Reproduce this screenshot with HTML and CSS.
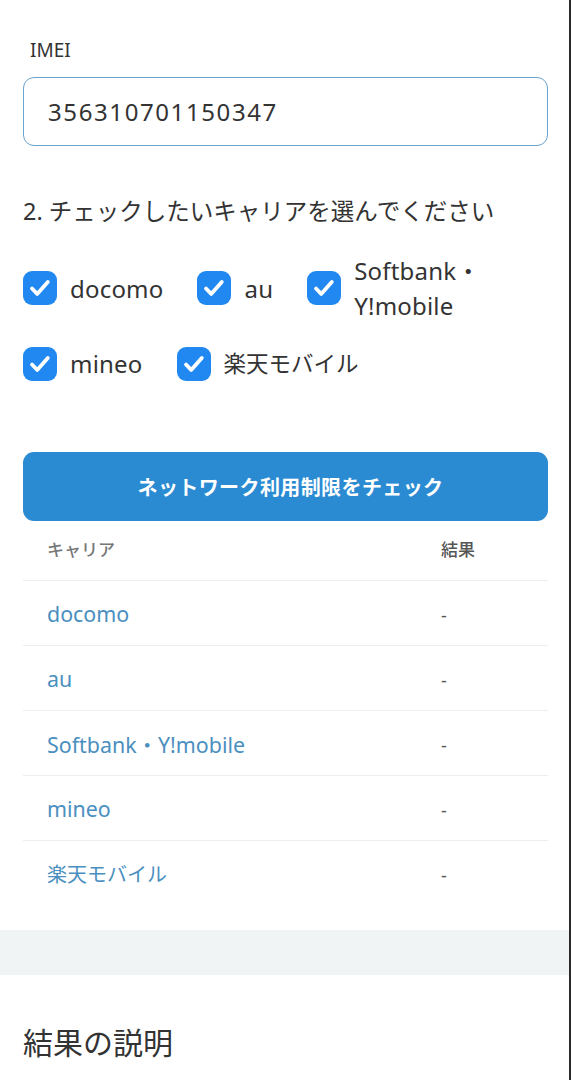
FILE: index.html
```html
<!DOCTYPE html>
<html lang="ja">
<head>
<meta charset="utf-8">
<title>ネットワーク利用制限チェック</title>
<link rel="stylesheet" href="styles.css">
</head>
<body>
<div class="page">
  <div class="content">
    <label class="field-label" for="imei">IMEI</label>
    <div class="input-box" id="imei">356310701150347</div>

    <h2 class="step">2. チェックしたいキャリアを選んでください</h2>

    <div class="carriers">
      <label class="cb"><svg class="box" viewBox="0 0 34 34"><rect width="34" height="34" rx="9" fill="#2088f0"/><path d="M9 17.5l5.2 5.4 10.6-12" fill="none" stroke="#fff" stroke-width="3.8" stroke-linecap="round" stroke-linejoin="round"/></svg><span class="cb-text lt">docomo</span></label>
      <label class="cb"><svg class="box" viewBox="0 0 34 34"><rect width="34" height="34" rx="9" fill="#2088f0"/><path d="M9 17.5l5.2 5.4 10.6-12" fill="none" stroke="#fff" stroke-width="3.8" stroke-linecap="round" stroke-linejoin="round"/></svg><span class="cb-text lt">au</span></label>
      <label class="cb cb-wide"><svg class="box" viewBox="0 0 34 34"><rect width="34" height="34" rx="9" fill="#2088f0"/><path d="M9 17.5l5.2 5.4 10.6-12" fill="none" stroke="#fff" stroke-width="3.8" stroke-linecap="round" stroke-linejoin="round"/></svg><span class="cb-text lt">Softbank・<wbr>Y!mobile</span></label>
      <label class="cb"><svg class="box" viewBox="0 0 34 34"><rect width="34" height="34" rx="9" fill="#2088f0"/><path d="M9 17.5l5.2 5.4 10.6-12" fill="none" stroke="#fff" stroke-width="3.8" stroke-linecap="round" stroke-linejoin="round"/></svg><span class="cb-text lt">mineo</span></label>
      <label class="cb"><svg class="box" viewBox="0 0 34 34"><rect width="34" height="34" rx="9" fill="#2088f0"/><path d="M9 17.5l5.2 5.4 10.6-12" fill="none" stroke="#fff" stroke-width="3.8" stroke-linecap="round" stroke-linejoin="round"/></svg><span class="cb-text">楽天モバイル</span></label>
    </div>

    <button class="check-btn" type="button">ネットワーク利用制限をチェック</button>

    <div class="result-table">
      <div class="row head"><div class="c1">キャリア</div><div class="c2">結果</div></div>
      <div class="row"><div class="c1 link lt">docomo</div><div class="c2">-</div></div>
      <div class="row"><div class="c1 link lt">au</div><div class="c2">-</div></div>
      <div class="row"><div class="c1 link lt">Softbank・Y!mobile</div><div class="c2">-</div></div>
      <div class="row"><div class="c1 link lt">mineo</div><div class="c2">-</div></div>
      <div class="row last"><div class="c1 link">楽天モバイル</div><div class="c2">-</div></div>
    </div>
  </div>

  <div class="band"></div>

  <div class="content">
    <h2 class="section-title">結果の説明</h2>
  </div>
</div>
</body>
</html>
```
FILE: styles.css
```css
* { box-sizing: border-box; }
html, body {
  margin: 0;
  padding: 0;
  background: #fff;
}
body {
  font-family: "Noto Sans", "Noto Sans CJK JP", sans-serif;
  color: #333;
}
.page {
  width: 571px;
  min-height: 1080px;
  border-right: 2px solid #2a2a2a;
  overflow: hidden;
}
.content {
  padding: 0 21px 0 23px;
}
.content:first-child {
  padding-top: 37px;
}
.field-label {
  display: block;
  font-size: 19px;
  line-height: 26px;
  color: #333;
  padding-left: 7px;
  margin-bottom: 14px;
}
.input-box {
  height: 69px;
  border: 1.5px solid #6aa3cc;
  border-radius: 11px;
  padding-left: 24px;
  display: flex;
  align-items: center;
  font-size: 24px;
  color: #333;
  letter-spacing: 1.6px;
}
.step {
  margin: 49px 0 0;
  font-size: 23.5px;
  font-weight: 400;
  line-height: 32px;
  color: #333;
}
.carriers {
  margin-top: 26px;
  display: flex;
  flex-wrap: wrap;
  align-items: center;
  column-gap: 34px;
  row-gap: 23px;
  width: 500px;
}
.cb {
  display: flex;
  align-items: center;
  gap: 13px;
  font-size: 22.5px;
  line-height: 35px;
  color: #333;
}
.cb .lt {
  font-size: 24px;
  letter-spacing: 0.2px;
}
.cb .box {
  width: 34px;
  height: 34px;
  flex: none;
}
.cb-wide {
  width: 175px;
}
.cb-wide .cb-text {
  width: 128px;
}
.check-btn {
  display: block;
  width: 100%;
  height: 69px;
  margin-top: 71px;
  border: 0;
  border-radius: 11px;
  background: #2a8bd3;
  color: #fff;
  font-family: "Noto Sans CJK JP", sans-serif;
  font-size: 20px;
  font-weight: 700;
  letter-spacing: 0.02em;
  padding: 0 0 0 10px;
}
.row {
  display: grid;
  grid-template-columns: 418px 1fr;
  align-items: center;
  height: 65px;
  border-bottom: 1.5px solid #eeeeee;
  font-size: 20px;
}
.row .lt {
  font-size: 21.4px;
}
.row.head {
  height: 60px;
  font-size: 17px;
  color: #777;
  font-weight: 500;
  padding-bottom: 4px;
}
.row.last {
  border-bottom: 0;
}
.c1 {
  padding-left: 24px;
}
.link {
  color: #4b8fc0;
}
.c2 {
  color: #555;
}
.row:not(.head) .c2 {
  font-size: 18px;
  padding-top: 3px;
}
.band {
  margin-top: 24px;
  height: 45px;
  background: #f0f4f5;
}
.section-title {
  margin: 48px 0 0;
  font-size: 30px;
  font-weight: 400;
  line-height: 40px;
  color: #333;
}
```
